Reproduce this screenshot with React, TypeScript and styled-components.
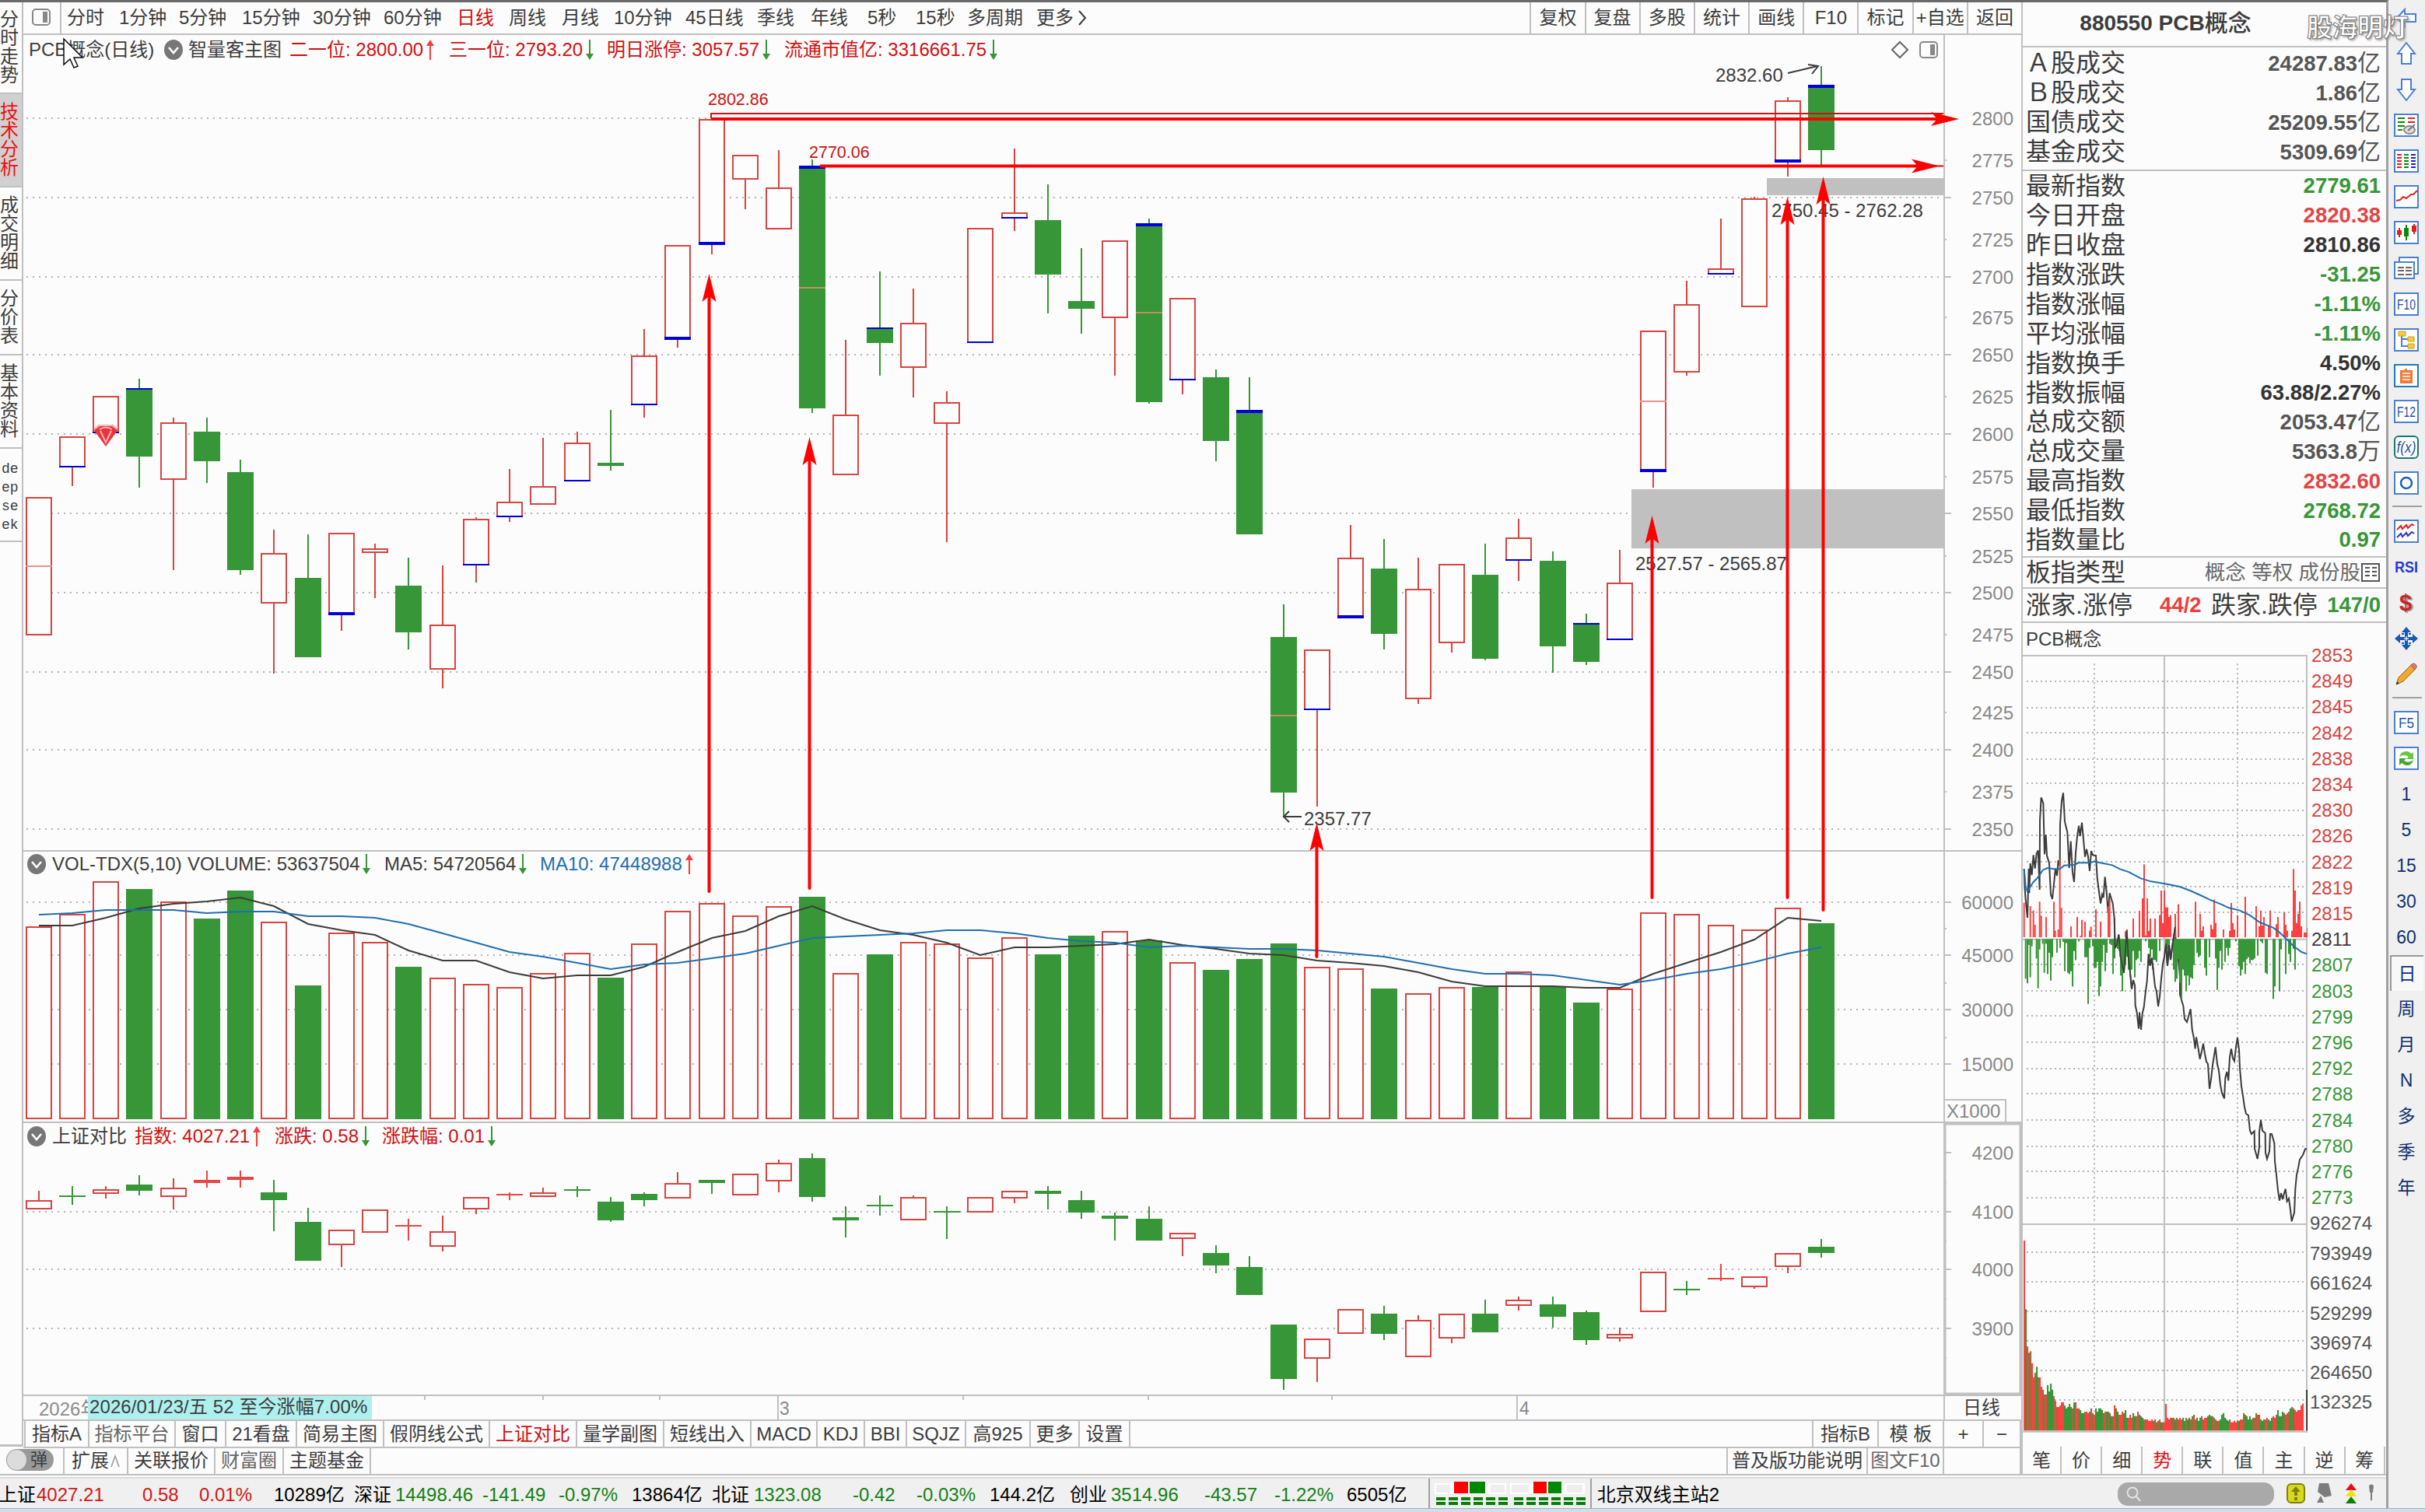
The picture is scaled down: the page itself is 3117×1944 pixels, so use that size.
import React from "react";
import styled, { createGlobalStyle, css } from "styled-components";

const RED = "#d64541";
const HOT = "#cf1010";
const GREEN = "#379637";
const LINE = "#c0c0c0";
const INK = "#3c3c3c";
const BG = "#fcfcfc";

const GlobalStyle = createGlobalStyle`
  * { box-sizing: border-box; }
  body {
    margin: 0;
    background: ${BG};
    color: ${INK};
    font: 24px/1 "Liberation Sans", "Noto Sans CJK SC", sans-serif;
  }
  svg { display: block; }
  svg text { font-family: "Liberation Sans", "Noto Sans CJK SC", sans-serif; }
`;

/* ---------- data ---------- */

// kind, high, top, bottom, low, opening mark thickness, middle line
type Candle = [string, number, number, number, number, number?, number?];

const PRICE: Candle[] = [
  ["r", 639, 639, 817, 817, 0, 728], ["r", 561, 561, 601, 625, 2], ["r", 509, 509, 557, 573, 2],
  ["g", 487, 499, 587, 627, 2], ["r", 537, 543, 617, 733], ["g", 537, 555, 593, 621],
  ["g", 591, 607, 733, 739], ["r", 681, 711, 776, 866], ["g", 687, 743, 845, 845],
  ["r", 685, 685, 791, 811, 4], ["r", 699, 705, 711, 769], ["g", 717, 753, 813, 835],
  ["r", 727, 803, 861, 885], ["r", 665, 667, 727, 749, 2], ["r", 603, 645, 665, 671, 2],
  ["r", 563, 625, 649, 649], ["r", 555, 569, 619, 619, 2], ["g", 527, 595, 599, 605],
  ["r", 423, 457, 521, 537, 2], ["r", 315, 315, 437, 447, 4], ["r", 153, 153, 315, 327, 4],
  ["r", 199, 199, 231, 269], ["r", 193, 241, 295, 295], ["g", 205, 213, 525, 531, 4, 370],
  ["r", 437, 533, 611, 611], ["g", 349, 421, 441, 483, 2], ["r", 371, 415, 473, 511],
  ["r", 503, 517, 545, 697], ["r", 293, 293, 441, 441, 2], ["r", 191, 273, 281, 297, 2],
  ["g", 237, 283, 353, 403], ["g", 319, 387, 397, 429], ["r", 309, 309, 409, 483],
  ["g", 281, 287, 517, 519, 4, 402], ["r", 383, 383, 489, 507, 2], ["g", 475, 485, 567, 593],
  ["g", 485, 527, 687, 687, 4], ["g", 777, 819, 1019, 1051, 0, 920], ["r", 835, 835, 913, 1037, 2],
  ["r", 675, 717, 795, 795, 4], ["g", 693, 731, 815, 835], ["r", 717, 757, 899, 905],
  ["r", 725, 725, 827, 839], ["g", 699, 739, 847, 849], ["r", 667, 691, 721, 747, 2],
  ["g", 709, 721, 831, 865], ["g", 789, 801, 851, 855, 2], ["r", 707, 749, 823, 823, 2],
  ["r", 425, 425, 607, 627, 4, 516], ["r", 361, 391, 479, 483], ["r", 281, 345, 353, 353, 2],
  ["r", 253, 255, 395, 395], ["r", 125, 129, 209, 227, 4], ["g", 85, 109, 193, 212, 4],
];

const VOLUME = [
  1191, 1175, 1133, 1143, 1159, 1181, 1145, 1185, 1267, 1199, 1211, 1243, 1257, 1265, 1269, 1251, 1225, 1257,
  1213, 1171, 1161, 1177, 1165, 1153, 1251, 1227, 1211, 1213, 1231, 1205, 1227, 1203, 1197, 1209, 1237, 1247,
  1233, 1213, 1243, 1245, 1271, 1277, 1269, 1269, 1249, 1269, 1289, 1271, 1173, 1175, 1189, 1195, 1167, 1187,
];
const MA5 = [
  1190, 1190, 1180, 1168, 1162, 1159, 1154, 1165, 1188, 1196, 1202, 1222, 1235, 1235, 1250, 1258, 1254, 1254,
  1243, 1224, 1206, 1197, 1178, 1165, 1182, 1196, 1202, 1212, 1228, 1218, 1218, 1216, 1214, 1208, 1215, 1220,
  1226, 1228, 1235, 1238, 1242, 1250, 1262, 1268, 1268, 1268, 1270, 1270, 1252, 1238, 1224, 1208, 1180, 1184,
];
const MA10 = [
  1176, 1174, 1170, 1170, 1170, 1174, 1172, 1172, 1178, 1178, 1180, 1188, 1200, 1212, 1224, 1230, 1238, 1246,
  1240, 1238, 1232, 1226, 1216, 1206, 1204, 1202, 1200, 1196, 1196, 1200, 1206, 1210, 1212, 1218, 1216, 1218,
  1220, 1220, 1222, 1226, 1230, 1238, 1246, 1252, 1252, 1254, 1260, 1266, 1260, 1252, 1246, 1237, 1226, 1218,
];

const INDEX: Candle[] = [
  ["r", 1531, 1543, 1555, 1555], ["g", 1525, 1537, 1539, 1549], ["r", 1525, 1529, 1535, 1541],
  ["g", 1511, 1523, 1531, 1537], ["r", 1515, 1527, 1539, 1555], ["s", 1505, 1517, 1521, 1527],
  ["s", 1505, 1513, 1517, 1527], ["g", 1517, 1533, 1543, 1583], ["g", 1553, 1571, 1621, 1621],
  ["r", 1581, 1581, 1601, 1629], ["r", 1555, 1555, 1585, 1585], ["s", 1567, 1575, 1577, 1595],
  ["r", 1563, 1583, 1603, 1609], ["r", 1539, 1539, 1555, 1561], ["s", 1533, 1535, 1537, 1543],
  ["r", 1527, 1533, 1539, 1539], ["g", 1525, 1529, 1531, 1539], ["g", 1539, 1545, 1569, 1571],
  ["g", 1533, 1535, 1543, 1551], ["r", 1507, 1521, 1541, 1541], ["g", 1517, 1517, 1521, 1535],
  ["r", 1509, 1509, 1537, 1537], ["r", 1491, 1495, 1519, 1533], ["g", 1483, 1489, 1539, 1545],
  ["g", 1551, 1565, 1569, 1591], ["g", 1537, 1549, 1551, 1563], ["r", 1537, 1539, 1569, 1569],
  ["g", 1551, 1557, 1559, 1593], ["r", 1539, 1539, 1559, 1559], ["r", 1531, 1531, 1541, 1547],
  ["g", 1525, 1531, 1535, 1555], ["g", 1531, 1543, 1559, 1567], ["g", 1559, 1563, 1567, 1595],
  ["g", 1551, 1567, 1595, 1595], ["r", 1585, 1585, 1593, 1615], ["g", 1601, 1611, 1627, 1637],
  ["g", 1615, 1629, 1665, 1665], ["g", 1703, 1703, 1773, 1787], ["r", 1721, 1721, 1747, 1777],
  ["r", 1683, 1683, 1715, 1715], ["g", 1679, 1689, 1715, 1723], ["r", 1691, 1697, 1745, 1745],
  ["r", 1689, 1689, 1721, 1727], ["g", 1671, 1689, 1713, 1713], ["r", 1667, 1671, 1679, 1685],
  ["g", 1667, 1677, 1693, 1707], ["g", 1685, 1687, 1723, 1729], ["r", 1707, 1715, 1721, 1725],
  ["r", 1635, 1635, 1687, 1687], ["g", 1647, 1657, 1659, 1665], ["s", 1625, 1643, 1645, 1647],
  ["r", 1641, 1641, 1655, 1657], ["r", 1611, 1611, 1629, 1637], ["g", 1593, 1603, 1611, 1617],
];

const candleX = (i: number) => Math.round(49.7 + i * 43.24);

const PERIODS: [string, number][] = [
  ["分时", 67], ["1分钟", 77], ["5分钟", 81], ["15分钟", 91], ["30分钟", 91], ["60分钟", 94], ["日线", 67],
  ["周线", 68], ["月线", 67], ["10分钟", 92], ["45日线", 92], ["季线", 69], ["年线", 73], ["5秒", 62],
  ["15秒", 66], ["多周期", 89],
];
const TOOLS = ["复权", "复盘", "多股", "统计", "画线", "F10", "标记", "+自选", "返回"];

const QUOTE_TOP = [
  ["Ａ股成交", "24287.83", "亿"], ["Ｂ股成交", "1.86", "亿"], ["国债成交", "25209.55", "亿"], ["基金成交", "5309.69", "亿"],
];
const QUOTES: [string, string, string, string?][] = [
  ["最新指数", "2779.61", GREEN], ["今日开盘", "2820.38", "#e04545"], ["昨日收盘", "2810.86", "#333"],
  ["指数涨跌", "-31.25", GREEN], ["指数涨幅", "-1.11%", GREEN], ["平均涨幅", "-1.11%", GREEN],
  ["指数换手", "4.50%", "#333"], ["指数振幅", "63.88/2.27%", "#333"], ["总成交额", "2053.47", "#555", "亿"],
  ["总成交量", "5363.8", "#555", "万"], ["最高指数", "2832.60", "#e04545"], ["最低指数", "2768.72", GREEN],
  ["指数量比", "0.97", GREEN],
];

const MINI_PRICE =
  "20,352 22,415 26,470 33,540 38,350 40,445 44,330 50,375 56,298 62,350 68,293 74,280 80,432 81,166 86,76 94,98 99,295 104,220 108,300 117,330 123,450 129,468 134,420 141,350 147,378 152,318 158,340 159,180 165,90 171,58 177,170 187,210 194,348 200,245 207,365 213,402 219,290 225,225 231,185 236,225 243,173 249,238 255,305 261,275 267,305 273,360 279,282 285,298 297,300 302,385 308,432 315,485 321,450 326,462 332,382 338,440 344,520 350,445 356,465 362,485 368,540 371,655 378,645 385,605 392,690 398,720 405,752 410,680 416,590 422,690 428,740 435,815 441,780 447,800 449,878 455,905 462,968 465,905 471,972 476,910 482,885 488,830 494,785 500,680 506,725 512,695 518,740 525,805 531,825 537,882 543,845 549,775 555,718 561,690 567,640 573,725 579,645 585,702 591,655 597,615 603,575 606,690 615,697 621,770 621,835 628,860 634,880 639,930 648,942 657,910 662,892 668,970 674,1000 680,1045 684,1000 692,1045 698,1085 705,1055 711,1025 717,1065 723,1095 729,1104 735,1200 741,1162 747,1109 753,1071 758,1039 765,1104 771,1130 777,1184 783,1216 792,1237 796,1157 802,1134 808,1168 813,1077 819,1045 825,1082 831,1093 837,1039 843,1002 849,1050 852,1120 858,1189 864,1227 870,1270 876,1296 885,1302 891,1361 897,1374 908,1363 909,1430 920,1470 927,1425 927,1366 933,1320 939,1361 950,1371 951,1446 957,1470 966,1441 969,1374 975,1374 985,1409 987,1479 993,1532 999,1591 1005,1631 1011,1602 1017,1626 1023,1602 1028,1586 1034,1634 1041,1623 1047,1666 1052,1711 1062,1677 1066,1586 1071,1532 1077,1505 1083,1473 1095,1455 1104,1432 1110,1432";
const MINI_AVG =
  "20,352 26,420 33,438 44,420 56,402 68,390 80,375 92,356 110,348 135,352 158,352 175,338 215,335 230,328 275,328 290,323 325,330 360,337 390,352 425,364 470,388 510,400 560,408 620,420 660,435 700,453 740,472 780,488 810,502 850,511 890,530 930,558 980,578 1000,592 1030,620 1060,650 1090,672 1110,679";
const MINI_UP =
  "20:482,44:495,56:512,62:567,80:478,86:532,105:537,135:478,140:590,152:585,158:315,164:502,201:573,225:537,237:610,243:548,255:555,273:590,278:574,297:507,315:555,345:495,350:470,411:592,417:585,441:543,465:513,477:465,483:334,489:608,495:465,501:590,507:543,525:543,543:530,549:435,555:560,561:435,567:500,573:500,579:537,585:530,603:525,615:488,681:478,699:525,705:590,711:573,741:567,747:584,753:470,759:560,789:585,813:590,819:483,825:560,831:585,843:530,873:459,915:495,927:573,933:512,939:570,945:537,963:573,969:512,993:565,999:537,1023:519,1029:567,1035:590,1053:590,1059:352,1065:435,1071:560,1077:525,1083:478,1089:573,1101:597,1107:597,1113:579";
const MINI_DOWN =
  "26:775,33:793,38:645,44:770,50:650,68:697,74:812,80:662,92:640,98:752,105:640,111:757,117:675,123:782,129:692,147:675,159:656,171:633,177:746,183:638,189:752,195:757,201:746,207:805,213:668,219:703,231:631,255:692,261:692,267:872,273:656,285:650,291:733,297:733,303:710,309:842,315:805,321:710,327:645,333:746,339:675,351:640,357:645,363:757,369:697,375:645,381:660,387:668,393:763,399:823,405:740,411:722,417:690,423:740,429:746,435:740,441:668,447:770,453:703,459:697,465:668,471:710,489:631,501:656,507:692,513:662,519:703,525:703,531:710,543:668,567:650,573:660,579:650,597:740,603:787,609:775,615:700,621:790,627:853,633:740,639:763,645:823,651:763,657:800,663:770,669:775,675:722,687:675,693:692,699:686,717:733,723:763,735:692,759:697,765:818,771:733,777:668,783:740,795:710,801:656,807:686,813:656,837:631,849:727,855:763,861:740,867:710,873:757,879:700,885:692,891:716,897:703,903:703,909:697,921:686,933:631,939:638,951:752,957:757,981:853,987:805,1005:823,1011:662,1029:757,1041:680,1047:710,1059:660,1065:740";
const MINI_VOL = [
  684, 437, 303, 280, 286, 242, 192, 208, 230, 192, 192, 158, 147, 130, 130, 164, 141, 169, 147, 124, 107, 85, 85,
  90, 102, 102, 90, 80, 85, 96, 85, 80, 102, 102, 80, 80, 74, 63, 63, 68, 68, 63, 68, 80, 63, 57, 80, 68, 80, 80,
  74, 63, 68, 68, 68, 63, 52, 52, 91, 80, 68, 57, 57, 68, 63, 74, 46, 46, 57, 46, 63, 52, 52, 68, 57, 52, 46, 40,
  40, 40, 35, 35, 40, 35, 40, 30, 35, 40, 30, 30, 30, 96, 46, 40, 46, 46, 46, 40, 46, 40, 46, 40, 46, 35, 46, 40,
  46, 40, 52, 57, 40, 46, 35, 46, 52, 40, 46, 46, 52, 57, 52, 52, 46, 40, 35, 35, 40, 57, 63, 46, 40, 35, 40, 30,
  30, 35, 30, 35, 35, 40, 40, 63, 57, 52, 40, 52, 40, 46, 46, 63, 57, 57, 40, 35, 40, 40, 46, 40, 35, 46, 52, 46,
  57, 74, 52, 52, 68, 63, 57, 63, 68, 80, 85, 80, 74, 68, 74, 74, 91, 97,
];
const MINI_VOL_TONE =
  "rgrbbrrbgbrrbbrggggbrbrrrrgggggbgrrbgggbrrbbbrgggggbrgbggbrggrrrgggrrrggbrgggbrrrrrbbbbbgbrrrrrbbgbbrrggbggbbbrgggbbrrgggbbbbbggggggrrrrrbgrrbgggggbbbrbgggrrgggrrbggggbbrbgbgrrrrrrr";
const TONES: Record<string, string> = { r: "#fb4141", g: GREEN, b: "#a2693c" };

/* ---------- layout ---------- */

const Screen = styled.div`
  position: relative;
  width: 3117px;
  height: 1944px;
  display: flex;
  flex-direction: column;
  overflow: hidden;
  background: ${BG};
`;
const Body = styled.div`
  height: 1939px;
  display: flex;
`;
const Main = styled.div`
  width: 3070px;
  display: flex;
  flex-direction: column;
  border-right: 3px solid #a0a0a0;
  border-top: 3px solid #6a6a6a;
`;
const BottomEdge = styled.div`
  height: 5px;
  background: #cfdfe9;
  border-top: 1px solid #9fb0ba;
`;
const Upper = styled.div`
  display: flex;
  height: 1894px;
`;
const Workspace = styled.div`
  width: 2600px;
  flex: none;
  border-right: 2px solid ${LINE};
`;
const Terminal = styled.div`
  display: flex;
  height: 1857px;
`;

const SideTabs = styled.div`
  width: 30px;
  flex: none;
  border-right: 2px solid ${LINE};
  border-bottom: 3px solid ${LINE};
`;
const SideTab = styled.div<{ h: number; active?: boolean; mono?: boolean }>`
  height: ${(p) => p.h}px;
  border-bottom: 2px solid ${LINE};
  display: flex;
  align-items: center;
  width: 28px;
  white-space: pre;
  font-size: 24px;
  line-height: 24px;
  word-break: break-all;
  ${(p) => p.active && css`background: #d0d0d0; color: #f01010;`}
  ${(p) => p.mono && css`font: 18px/24px "Liberation Mono", monospace; padding: 5px 0 0 2px;`}
  span { width: 25px; white-space: pre-line; }
`;
const Center = styled.div`
  width: 2568px;
`;
const PeriodBar = styled.div`
  height: 42px;
  display: flex;
  align-items: center;
  border-bottom: 2px solid ${LINE};
`;
const LayoutCell = styled.div`
  width: 49px;
  height: 40px;
  margin-right: 7px;
  padding: 8px 0 0 11px;
  border-right: 2px solid ${LINE};
`;
const Period = styled.div<{ w: number; active?: boolean }>`
  width: ${(p) => p.w}px;
  flex: none;
  white-space: nowrap;
  color: ${(p) => (p.active ? HOT : INK)};
`;
const Tools = styled.div`
  margin-left: auto;
  display: flex;
  height: 40px;
`;
const Tool = styled.div`
  width: 70.2px;
  display: flex;
  align-items: center;
  justify-content: center;
  white-space: nowrap;
  border-left: 2px solid ${LINE};
`;

const Panel = styled.div<{ h: number }>`
  position: relative;
  height: ${(p) => p.h}px;
`;
const Legend = styled.div<{ x: number; y: number }>`
  position: absolute;
  left: ${(p) => p.x}px;
  top: ${(p) => p.y}px;
  height: 34px;
  display: flex;
  align-items: center;
`;
const LegendText = styled.div<{ w?: number; tone?: string }>`
  display: flex;
  align-items: center;
  flex: none;
  width: ${(p) => (p.w ? p.w + "px" : "auto")};
  color: ${(p) => p.tone || INK};
  white-space: pre;
`;
const TrendIcon = styled.svg`
  margin-left: 4px;
`;
const DateRow = styled.div`
  height: 32px;
  display: flex;
  border-bottom: 2px solid ${LINE};
`;
const DateYear = styled.div`
  width: 83px;
  flex: none;
  padding: 5px 0 0 20px;
  overflow: hidden;
  white-space: nowrap;
  color: #8c8c8c;
`;
const DateHint = styled.div`
  width: 365px;
  flex: none;
  padding: 2px 0 0 2px;
  background: #aef0ee;
  white-space: nowrap;
  letter-spacing: 0.1px;
`;
const DateScale = styled.div`
  width: 2020px;
  flex: none;
`;
const PeriodName = styled.div`
  width: 100px;
  padding: 3px 4px 0 0;
  text-align: center;
  border-left: 2px solid ${LINE};
`;

const TabRow = styled.div<{ h: number; inset?: number }>`
  display: flex;
  height: ${(p) => p.h}px;
  padding-left: ${(p) => p.inset || 0}px;
  border-bottom: 2px solid ${LINE};
`;
const Tab = styled.div<{ w: number; tone?: string; first?: boolean }>`
  width: ${(p) => p.w}px;
  flex: none;
  display: flex;
  align-items: center;
  justify-content: center;
  white-space: pre;
  color: ${(p) => p.tone || INK};
  border-right: 2px solid ${LINE};
  ${(p) => p.first && css`border-left: 2px solid ${LINE};`}
`;
const Push = styled.div`
  margin-left: auto;
  display: flex;
`;
const Toggle = styled.div`
  width: 61px;
  height: 28px;
  margin: 3px 12px 0 8px;
  border-radius: 14px;
  background: #999;
  display: flex;
  align-items: center;
  gap: 5px;
  font-size: 22px;
  &::before {
    content: "";
    width: 25px;
    height: 26px;
    margin-left: 1px;
    border-radius: 50%;
    background: #dcdcdc;
  }
`;

const Quotes = styled.div`
  width: 467px;
  flex: none;
`;
const QuoteTitle = styled.div`
  height: 58px;
  border-bottom: 2px solid ${LINE};
  display: flex;
  align-items: center;
  justify-content: center;
  padding: 0 100px 3px 0;
  font-size: 28px;
  font-weight: 700;
  span { font-weight: 500; font-size: 30px; }
`;
const QuoteGroup = styled.div<{ h: number; pad?: number }>`
  height: ${(p) => p.h}px;
  border-bottom: 2px solid ${LINE};
  padding: ${(p) => p.pad || 0}px 7px 0 4px;
`;
const QuoteRow = styled.div<{ h?: number }>`
  height: ${(p) => p.h || 37.95}px;
  display: flex;
  align-items: center;
  justify-content: space-between;
  font-size: 32px;
  white-space: pre;
`;
const QuoteValue = styled.div<{ tone: string }>`
  color: ${(p) => p.tone};
  font-size: 27.5px;
  font-weight: 700;
  span { font-weight: 400; font-size: 30px; }
`;
const QuoteNote = styled.div`
  display: flex;
  align-items: center;
  font-size: 26.5px;
  color: #6a6a6a;
`;
const MiniTitle = styled.div`
  height: 41px;
  padding: 9px 0 0 4px;
`;
const MiniBody = styled.div`
  display: flex;
  height: 1018px;
`;
const Scale = styled.svg`
  overflow: visible;
`;

const Status = styled.div`
  height: 42px;
  margin-top: 2px;
  border-top: 2px solid #dcdcdc;
  background: #f0f0f0;
  display: flex;
  align-items: center;
  font-size: 24px;
  color: #000;
`;
const StatusText = styled.div<{ w: number; tone?: string }>`
  width: ${(p) => p.w}px;
  flex: none;
  padding-top: 2px;
  color: ${(p) => p.tone || "#000"};
  white-space: nowrap;
  &:first-child { margin-left: -2px; }
`;
const Lights = styled.div`
  width: 210px;
  height: 40px;
  flex: none;
  border-left: 2px solid #a0a0a0;
  border-right: 2px solid #a0a0a0;
`;
const SearchBox = styled.div`
  width: 201px;
  height: 30px;
  margin-left: auto;
  padding: 5px 0 0 11px;
  border-radius: 13px;
  background: #a9a9a9;
`;

const IconStrip = styled.div`
  width: 47px;
  padding-left: 2px;
  background: #f0f0f0;
`;
const IconCell = styled.div<{ active?: boolean }>`
  height: 46px;
  width: 43px;
  padding-right: 1px;
  display: flex;
  align-items: center;
  justify-content: center;
  font-size: 23px;
  color: #12306e;
  ${(p) => p.active && css`
    background: #f8f8f8;
    border-left: 2px solid #999;
    border-top: 2px solid #999;
  `}
`;
const StripRule = styled.div`
  height: 16px;
  padding: 6px 0 0 3px;
  &::after {
    content: "";
    display: block;
    width: 38px;
    height: 2px;
    background: #a0a0a0;
  }
`;

const Overlay = styled.svg`
  position: absolute;
  left: 0;
  top: 0;
  pointer-events: none;
`;
const Watermark = styled.div`
  position: absolute;
  left: 2965px;
  top: 19px;
  font-size: 33px;
  font-weight: 700;
  color: #fff;
  letter-spacing: -0.4px;
  white-space: nowrap;
  -webkit-text-stroke: 1px #777;
  text-shadow: 2px 2px 3px #999;
`;

/* ---------- small drawings ---------- */

const Chevron = () => (
  <svg width="24" height="26" viewBox="0 0 24 26">
    <ellipse cx="12" cy="13" rx="12" ry="13" fill="#777" />
    <path d="M6 10l6 7 6-7" fill="none" stroke="#fff" strokeWidth="2.5" />
  </svg>
);

const Trend = ({ up }: { up?: boolean }) => (
  <TrendIcon width="10" height="26" viewBox="0 0 10 26">
    {up ? (
      <path d="M5 0l5 8H6v18H4V8H0z" fill="#f04040" />
    ) : (
      <path d="M5 26l5-8H6V0H4v18H0z" fill={GREEN} />
    )}
  </TrendIcon>
);

const HalfBox = () => (
  <svg width="24" height="22" viewBox="0 0 24 22">
    <rect x="1" y="1" width="22" height="20" rx="4" fill="none" stroke="#888" strokeWidth="2" />
    <rect x="14" y="4" width="6" height="14" fill="#888" />
  </svg>
);

function Candles({ data, y0 }: { data: Candle[]; y0: number }) {
  return (
    <g>
      {data.map(([kind, high, top, bottom, low, mark = 0, mid], i) => {
        const x = candleX(i) - 30;
        const color = kind === "g" ? GREEN : kind === "s" ? "#e84545" : RED;
        const markY = (kind === "g" ? top : bottom - mark) - y0;
        return (
          <g key={i}>
            {high < top && <rect x={x - 1} y={high - y0} width={2} height={top - high} fill={color} />}
            {low > bottom && <rect x={x - 1} y={bottom - y0} width={2} height={low - bottom} fill={color} />}
            {kind === "r" ? (
              <rect x={x - 16} y={top + 1 - y0} width={32} height={bottom - top - 2} fill="#fdfdfd" stroke={color} strokeWidth={2} />
            ) : (
              <rect x={x - 17} y={top - y0} width={34} height={bottom - top} fill={color} />
            )}
            {mark > 0 && <rect x={x - 17} y={markY} width={34} height={mark} fill="#0000dc" />}
            {mid && <rect x={x - 17} y={mid - 1 - y0} width={34} height={2} fill={kind === "g" ? "#c09060" : "#ee9090"} />}
          </g>
        );
      })}
    </g>
  );
}

function Grid({ rows, y0 }: { rows: number[]; y0: number }) {
  return (
    <g>
      {rows.map((y) => (
        <line key={y} x1={4} x2={2468} y1={y - y0} y2={y - y0} stroke="#b4b4b4" strokeWidth={2} strokeDasharray="2 6" />
      ))}
    </g>
  );
}

function Axis({ marks, minor, y0, h }: { marks: [number, string][]; minor: number[]; y0: number; h: number }) {
  return (
    <g>
      <line x1={2469} x2={2469} y1={0} y2={h} stroke={LINE} strokeWidth={2} />
      {marks.map(([y, label]) => (
        <g key={label}>
          {!minor.includes(y) && <line x1={2468} x2={2478} y1={y - y0} y2={y - y0} stroke={LINE} strokeWidth={2} />}
          <text x={2558} y={y - y0 + 9} textAnchor="end" fontSize={24} fill="#888">{label}</text>
        </g>
      ))}
      {minor.map((y) => (
        <line key={y} x1={2468} x2={2472} y1={y - y0} y2={y - y0} stroke={LINE} strokeWidth={2} />
      ))}
    </g>
  );
}

const PRICE_MARKS: [number, string][] = [
  [152, "2800"], [206, "2775"], [254, "2750"], [308, "2725"], [356, "2700"], [408, "2675"], [456, "2650"],
  [510, "2625"], [558, "2600"], [613, "2575"], [660, "2550"], [715, "2525"], [762, "2500"], [816, "2475"],
  [864, "2450"], [916, "2425"], [964, "2400"], [1018, "2375"], [1066, "2350"],
];

function PricePanel() {
  return (
    <Panel h={1050}>
      <svg width={2568} height={1050}>
        <Grid y0={45} rows={PRICE_MARKS.filter((_, i) => i % 2 === 0).map((m) => m[0])} />
        <rect x={2241} y={184} width={227} height={22} fill={LINE} />
        <rect x={2067} y={584} width={401} height={76} fill={LINE} />
        <Candles data={PRICE} y0={45} />
        <g transform="translate(0 5)">
          <path d="M97 496h18l7 6-16 22-16-22z" fill="#e8343c" />
          <path d="M91 502l7-5h16l7 5M99 504l7 15 7-15M98 502q8-5 16 0" fill="none" stroke="#ffb4b4" strokeWidth={2} />
        </g>
        <Axis y0={45} h={1050} marks={PRICE_MARKS} minor={PRICE_MARKS.filter((_, i) => i % 2).map((m) => m[0])} />
        <g fontSize={24} fill={INK}>
          <text x={2175} y={60}>2832.60</text>
          <text x={2247} y={234}>2750.45 - 2762.28</text>
          <text x={2072} y={688}>2527.57 - 2565.87</text>
          <text x={1646} y={1016}>2357.77</text>
          <path d="M2268 49l38-9M2294 38l13 2-8 10M1643 1005h-23M1627 998l-7 7 7 7" fill="none" stroke={INK} strokeWidth={2} />
        </g>
        <g fontSize={21.5} fill={HOT}>
          <text x={880} y={90}>2802.86</text>
          <text x={1010} y={158}>2770.06</text>
        </g>
        <path d="M2412 9l10 10-10 10-10-10z" fill="none" stroke="#666" strokeWidth={2} />
        <g transform="translate(2437 8)">
          <rect x="1" y="1" width="22" height="20" rx="4" fill="none" stroke="#888" strokeWidth="2" />
          <rect x="14" y="4" width="6" height="14" fill="#888" />
        </g>
        <rect y={1048} width={2568} height={2} fill={LINE} />
      </svg>
      <Legend x={7} y={2}>
        <LegendText w={174}>PCB概念(日线)</LegendText>
        <LegendText w={31}><Chevron /></LegendText>
        <LegendText w={130}>智量客主图</LegendText>
        <LegendText w={205} tone={HOT}>二一位: 2800.00<Trend up /></LegendText>
        <LegendText w={203} tone={HOT}>三一位: 2793.20<Trend /></LegendText>
        <LegendText w={228} tone={HOT}>明日涨停: 3057.57<Trend /></LegendText>
        <LegendText tone={HOT}>流通市值亿: 3316661.75<Trend /></LegendText>
      </Legend>
    </Panel>
  );
}

function VolumePanel() {
  const points = (list: number[]) => list.map((v, i) => `${candleX(i) - 30},${v - 1095}`).join(" ");
  return (
    <Panel h={349}>
      <svg width={2568} height={349}>
        <Grid y0={1095} rows={[1160, 1228, 1298, 1368]} />
        {VOLUME.map((top, i) =>
          PRICE[i][0] === "g" ? (
            <rect key={i} x={candleX(i) - 47} y={top - 1095} width={34} height={1439 - top} fill={GREEN} />
          ) : (
            <rect key={i} x={candleX(i) - 46} y={top - 1094} width={32} height={1437 - top} fill="#fdfdfd" stroke={RED} strokeWidth={2} />
          )
        )}
        <polyline points={points(MA5)} fill="none" stroke={INK} strokeWidth={2} />
        <polyline points={points(MA10)} fill="none" stroke="#1f6fb0" strokeWidth={2} />
        <Axis
          y0={1095}
          h={349}
          marks={[[1160, "60000"], [1228, "45000"], [1298, "30000"], [1368, "15000"]]}
          minor={[1194, 1264, 1334]}
        />
        <rect x={2469} y={319} width={79} height={29} fill="none" stroke={LINE} strokeWidth={2} />
        <text x={2472} y={342} fontSize={24} fill="#888">X1000</text>
        <rect y={347} width={2568} height={2} fill={LINE} />
      </svg>
      <Legend x={5} y={-1}>
        <LegendText w={32}><Chevron /></LegendText>
        <LegendText w={174}>VOL-TDX(5,10)</LegendText>
        <LegendText w={253}>VOLUME: 53637504<Trend /></LegendText>
        <LegendText w={200}>MA5: 54720564<Trend /></LegendText>
        <LegendText tone="#1f6fb0">MA10: 47448988<Trend up /></LegendText>
      </Legend>
    </Panel>
  );
}

function IndexPanel() {
  return (
    <Panel h={351}>
      <svg width={2568} height={351}>
        <Grid y0={1444} rows={[1558, 1632, 1708]} />
        <Candles data={INDEX} y0={1444} />
        <Axis
          y0={1444}
          h={351}
          marks={[[1482, "4200"], [1558, "4100"], [1632, "4000"], [1708, "3900"]]}
          minor={[1520, 1596, 1670, 1746]}
        />
        <rect x={2470} y={1} width={97} height={347} fill="none" stroke={LINE} strokeWidth={3} />
        <rect y={349} width={2568} height={2} fill={LINE} />
      </svg>
      <Legend x={5} y={0}>
        <LegendText w={32}><Chevron /></LegendText>
        <LegendText w={106}>上证对比</LegendText>
        <LegendText w={180} tone={HOT}>指数: 4027.21<Trend up /></LegendText>
        <LegendText w={138} tone={HOT}>涨跌: 0.58<Trend /></LegendText>
        <LegendText tone={HOT}>涨跌幅: 0.01<Trend /></LegendText>
      </Legend>
    </Panel>
  );
}

const bars = (src: string) => src.split(",").map((s) => s.split(":").map(Number));

// drawn in thirds of a pixel so that the minute bars keep their odd widths
const MiniPlot = styled.svg`
  flex: none;
`;

function MiniChart() {
  const rows = [876, 910, 942, 976, 1007, 1042, 1074, 1108, 1140, 1173, 1240, 1274, 1306, 1340, 1374, 1406, 1440, 1474, 1506, 1540, 1610, 1648, 1686, 1724, 1762, 1800];
  return (
    <MiniPlot width={366} height={1000} viewBox="15 -474 1098 3000">
      {rows.map((y) => (
        <line key={y} x1={30} x2={1104} y1={(y - 1000) * 3} y2={(y - 1000) * 3} stroke="#b4b4b4" strokeWidth={6} strokeDasharray="6 12" />
      ))}
      {[291, 843].map((x) => (
        <line key={x} x1={x} x2={x} y1={-440} y2={2516} stroke="#b4b4b4" strokeWidth={6} strokeDasharray="6 12" />
      ))}
      <path d="M561-474V2520M15 623H1113M15 1722H1113M15-471H1110V2526M15 2522H1113" fill="none" stroke={LINE} strokeWidth={6} />
      <polyline points={MINI_PRICE} fill="none" stroke={INK} strokeWidth={6} />
      {bars(MINI_UP).map(([x, y]) => (
        <rect key={x} x={x - 3} y={y} width={6} height={615 - y} fill="#fb4141" />
      ))}
      {bars(MINI_DOWN).map(([x, y]) => (
        <rect key={x} x={x - 3} y={622} width={6} height={y - 622} fill={GREEN} />
      ))}
      <polyline points="368,540 371,655 378,645 385,605 392,690 398,720 405,752 410,680 416,590 422,690 428,740 435,815" fill="none" stroke={INK} strokeWidth={5} />
      <polyline points="500,680 506,725 512,695 518,740" fill="none" stroke={INK} strokeWidth={6} />
      <polyline points="567,640 573,725 579,645 585,702 591,655 597,615 603,575" fill="none" stroke={INK} strokeWidth={6} />
      <polyline points={MINI_AVG} fill="none" stroke="#1f6fb0" strokeWidth={6} />
      {MINI_VOL.slice(0, 181).map((v, i) => (
        <rect key={i} x={18 + i * 6} y={2518 - v * 1.0714} width={6.3} height={v * 1.0714} fill={TONES[MINI_VOL_TONE[i]] || TONES.r} />
      ))}
      <rect x={1108} y={2361} width={5} height={157} fill="#222" />
    </MiniPlot>
  );
}

function MiniScale() {
  const prices = [2853, 2849, 2845, 2842, 2838, 2834, 2830, 2826, 2822, 2819, 2815, 2811, 2807, 2803, 2799, 2796, 2792, 2788, 2784, 2780, 2776, 2773];
  const volumes = [926274, 793949, 661624, 529299, 396974, 264650, 132325];
  return (
    <Scale width={100} height={1018}>
      {prices.map((p, i) => (
        <text key={p} x={5} y={9 + i * 33.2} fontSize={24} fill={i < 11 ? RED : i === 11 ? INK : GREEN}>{p}</text>
      ))}
      {volumes.map((v, i) => (
        <text key={v} x={3} y={i ? 740 + i * 38.2 : 739} fontSize={24} fill="#555">{v}</text>
      ))}
    </Scale>
  );
}

/* ---------- icon strip ---------- */

const Frame = ({ children, color = "#4a7fd4" }: { children?: React.ReactNode; color?: string }) => (
  <svg width="32" height="30" viewBox="0 0 32 30">
    <rect x="1" y="1" width="30" height="28" fill="#fff" stroke={color} strokeWidth="2" />
    {children}
  </svg>
);

const FrameText = ({ label, width = 24 }: { label: string; width?: number }) => (
  <text x="16" y="22" textAnchor="middle" fontSize={19} fill="#2150a8" textLength={width} lengthAdjust="spacingAndGlyphs">
    {label}
  </text>
);

const STRIP_ICONS = [
  <svg width="28" height="26" viewBox="0 0 28 26"><path d="M2 13l10-11v6h14v10H12v6z" fill="#fff" stroke="#4a7fd4" strokeWidth="2" /></svg>,
  <svg width="26" height="32" viewBox="0 0 26 32"><path d="M13 2l11 14h-5v13H7V16H2z" fill="#fff" stroke="#4a7fd4" strokeWidth="2" /></svg>,
  <svg width="26" height="32" viewBox="0 0 26 32"><path d="M13 30l11-14h-5V3H7v13H2z" fill="#fff" stroke="#4a7fd4" strokeWidth="2" /></svg>,
  <Frame>
    <path d="M5 6h9M5 11h9M5 16h9M5 21h6" stroke="#0a8a0a" strokeWidth="2" />
    <path d="M18 6h9M18 11h9" stroke="#e02020" strokeWidth="2" />
    <ellipse cx="20" cy="21" rx="7" ry="5" fill="#ddd" stroke="#888" strokeWidth="2" />
    <path d="M18 22l9-8" stroke="#777" strokeWidth="2" />
  </Frame>,
  <Frame>
    <path d="M4 7h6M4 11h6M4 15h6M4 19h6M4 23h6" stroke="#e02020" strokeWidth="2" />
    <path d="M13 7h6M13 11h6M13 15h6M13 19h6M13 23h6" stroke="#0a8a0a" strokeWidth="2" />
    <path d="M22 7h6M22 11h6M22 15h6M22 19h6M22 23h6" stroke="#2020d0" strokeWidth="2" />
  </Frame>,
  <Frame><path d="M3 20l5-1 4-4 4 2 6-5h3l5-5" fill="none" stroke="#e02020" strokeWidth="2" /></Frame>,
  <Frame>
    <path d="M7 9v12M26 4v13" stroke="#e02020" strokeWidth="2" />
    <path d="M4 12h6v6H4zM23 6h6v8h-6z" fill="#e02020" />
    <path d="M16 5v20" stroke="#0a8a0a" strokeWidth="2" />
    <path d="M13 9h6v11h-6z" fill="#0a8a0a" />
  </Frame>,
  <svg width="32" height="30" viewBox="0 0 32 30">
    <path d="M7 1h24v21H7z" fill="#fff" stroke="#4a7fd4" strokeWidth="2" />
    <path d="M1 7h25v21H1z" fill="#fff" stroke="#4a7fd4" strokeWidth="2" />
    <path d="M5 14h8M15 14h8M5 18h8M15 18h8M5 23h8M15 23h8" stroke="#666" strokeWidth="2" />
  </svg>,
  <Frame><FrameText label="F10" /></Frame>,
  <Frame>
    <path d="M10 8v15h9M10 14h9" fill="none" stroke="#4a7fd4" strokeWidth="2" />
    <path d="M6 4h9v6H6zM18 11h8v6h-8zM18 20h8v6h-8z" fill="#f4cc40" stroke="#d0a010" />
  </Frame>,
  <Frame color="#1c7cc4">
    <path d="M8 8h5l3-3 1 3h7v17H8z" fill="#f07a3c" />
    <path d="M11 12h10M11 16h10M11 20h10" stroke="#fff" strokeWidth="1.5" />
  </Frame>,
  <Frame><FrameText label="F12" /></Frame>,
  <svg width="32" height="30" viewBox="0 0 32 30">
    <rect x="1" y="1" width="30" height="28" rx="5" fill="#fff" stroke="#187878" strokeWidth="2" />
    <text x="16" y="22" textAnchor="middle" fontSize="20" fontStyle="italic" fill="#2150a8" textLength={25} lengthAdjust="spacingAndGlyphs">f(x)</text>
  </svg>,
  <Frame><ellipse cx="16" cy="15" rx="7" ry="7" fill="none" stroke="#1c60c0" strokeWidth="2.5" /></Frame>,
];

const STRIP_TOOLS = [
  <Frame>
    <path d="M4 13l5-5 2 4 5-5 2 4 5-5 3 2" fill="none" stroke="#e02020" strokeWidth="2" />
    <path d="M4 23l5-5 2 4 5-5 2 4 5-5 3 2" fill="none" stroke="#3030d0" strokeWidth="2" />
  </Frame>,
  <svg width="32" height="24"><text x="16" y="19" textAnchor="middle" fontSize="20" fontWeight="700" fill="#2838d0" textLength="30" lengthAdjust="spacingAndGlyphs">RSI</text></svg>,
  <svg width="28" height="36">
    <text x="15" y="29" textAnchor="middle" fontSize="29" fontWeight="700" fill="#999">$</text>
    <text x="13" y="28" textAnchor="middle" fontSize="29" fontWeight="700" fill="#c82828">$</text>
  </svg>,
  <svg width="30" height="30" viewBox="0 0 30 30">
    <path d="M15 0l6 7h-4v6h6V9l7 6-7 6v-4h-6v6h4l-6 7-6-7h4v-6H7v4l-7-6 7-6v4h6V7H9z" fill="#1858b0" />
    <path d="M9 9h3M18 9h3M9 21h3M18 21h3" stroke="#1858b0" strokeWidth="2" />
    <path d="M12 15h6M15 12v6" stroke="#d8e8ff" strokeWidth="1.5" />
  </svg>,
  <svg width="30" height="30" viewBox="0 0 30 30">
    <path d="M2 28l3-9L21 3l6 5L11 24z" fill="#f0a830" stroke="#9a6414" />
    <path d="M21 3l3-2q5 1 4 5l-2 3z" fill="#e87878" stroke="#a05050" />
    <path d="M2 28l1-4 3 3z" fill="#333" />
  </svg>,
];

const Refresh = () => (
  <Frame>
    <path d="M7 13q2-8 11-7l5 3 2-2v9h-9l3-3q-6-4-12 0z" fill="#66c840" />
    <path d="M25 17q-2 8-10 7l-5-3-3 3v-9h9l-3 3q6 4 12-1z" fill="#40a830" />
  </Frame>
);

const IND_TABS: [string, number][] = [
  ["指标A", 84], ["指标平台", 111], ["窗口", 65], ["21看盘", 91], ["简易主图", 112], ["假阴线公式", 136],
  ["上证对比", 112], ["量学副图", 112], ["短线出入", 112], ["MACD", 85], ["KDJ", 61], ["BBI", 54], ["SQJZ", 76],
  ["高925", 83], ["更多", 63], ["设置", 65],
];
const S_RED = "#d01818";
const S_GREEN = "#148014";
const STATUS: [string, number, string?][] = [
  ["上证", 49, "#000"], ["4027.21", 136, S_RED], ["0.58", 73, S_RED], ["0.01%", 96, S_RED], ["10289亿", 103],
  ["深证", 53], ["14498.46", 112, S_GREEN], ["-141.49", 98, S_GREEN], ["-0.97%", 94, S_GREEN], ["13864亿", 103],
  ["北证", 54], ["1323.08", 127, S_GREEN], ["-0.42", 82, S_GREEN], ["-0.03%", 94, S_GREEN], ["144.2亿", 103],
  ["创业", 53], ["3514.96", 120, S_GREEN], ["-43.57", 90, S_GREEN], ["-1.22%", 93, S_GREEN], ["6505亿", 105],
];

const UpArrow = ({ x, tip, end }: { x: number; tip: number; end: number }) => (
  <g>
    <line x1={x} x2={x} y1={tip + 20} y2={end} stroke="#f00" strokeWidth={4} strokeLinecap="round" />
    <path d={`M${x} ${tip}l9 36-9-7-9 7z`} fill="#f00" />
  </g>
);

const RightArrow = ({ x1, x2, y }: { x1: number; x2: number; y: number }) => (
  <g>
    <line x1={x1} x2={x2 - 20} y1={y} y2={y} stroke="#f00" strokeWidth={4} />
    <path d={`M${x2} ${y}l-36-9 8 9-8 9z`} fill="#f00" />
  </g>
);

function StatusLights() {
  return (
    <svg width="206" height="40">
      <path d="M6 6h92v14H6zM103 6h96v14h-96z" fill="#fff" />
      <path d="M8 8h18v10H8zM78 8h18v10H78zM105 8h22v10h-22zM176 8h20v10h-20z" fill="#eee" />
      <path d="M31 4h18v15H31zM133 4h17v15h-17z" fill="#f00" />
      <path d="M51 4h20v15H51zM152 4h17v15h-17z" fill="#080" />
      {[0, 1, 2, 3, 4, 5, 6.25, 7.25, 8.25, 9.25, 10.25, 11.25].map((i) => (
        <path key={i} d={`M${8 + i * 16} 24h12v4h-12zM${8 + i * 16} 30h12v4h-12z`} fill="#0a7d0a" />
      ))}
    </svg>
  );
}

export default function App() {
  return (
    <Screen>
      <GlobalStyle />
      <Body>
        <Main>
          <Upper>
            <Workspace>
              <Terminal>
                <SideTabs>
                  <SideTab h={118}><span>分时走势</span></SideTab>
                  <SideTab h={120} active><span>技术分析</span></SideTab>
                  <SideTab h={120}><span>成交明细</span></SideTab>
                  <SideTab h={96}><span>分价表</span></SideTab>
                  <SideTab h={120}><span>基本资料</span></SideTab>
                  <SideTab h={120} mono><span>deepseek</span></SideTab>
                </SideTabs>
                <Center>
                  <PeriodBar>
                    <LayoutCell><HalfBox /></LayoutCell>
                    {PERIODS.map(([name, w]) => (
                      <Period key={name} w={w} active={name === "日线"}>{name}</Period>
                    ))}
                    <Period w={52}>更多</Period>
                    <svg width="14" height="26"><path d="M3 4l8 9-8 9" fill="none" stroke={INK} strokeWidth="2" /></svg>
                    <Tools>
                      {TOOLS.map((name) => (
                        <Tool key={name}>{name}</Tool>
                      ))}
                    </Tools>
                  </PeriodBar>
                  <PricePanel />
                  <VolumePanel />
                  <IndexPanel />
                  <DateRow>
                    <DateYear>2026年</DateYear>
                    <DateHint>2026/01/23/五 52 至今涨幅7.00%</DateHint>
                    <DateScale>
                      <svg width="2020" height="30">
                        <path d="M68 0v5M220 0v5M370 0v5M760 0v5M998 0v5M1234 0v5M522 0v30M1472 0v30" stroke={LINE} strokeWidth="2" />
                        <text x="524" y="24" fontSize="23" fill="#888">3</text>
                        <text x="1475" y="24" fontSize="23" fill="#888">4</text>
                      </svg>
                    </DateScale>
                    <PeriodName>日线</PeriodName>
                  </DateRow>
                  <TabRow h={35} inset={1}>
                    {IND_TABS.map(([name, w], i) => (
                      <Tab key={name} w={w} first={!i} tone={name === "上证对比" ? HOT : i === 1 ? "#666" : undefined}>{name}</Tab>
                    ))}
                    <Push>
                      <Tab w={86} first>指标B</Tab>
                      <Tab w={84}>模 板</Tab>
                      <Tab w={51}>+</Tab>
                      <Tab w={48}>−</Tab>
                    </Push>
                  </TabRow>
                </Center>
              </Terminal>
              <TabRow h={37}>
                <Toggle>弹</Toggle>
                <Tab w={84} first>扩展<svg width="14" height="20"><path d="M3 18L8 4l5 14" fill="none" stroke="#999" strokeWidth="1.5" /></svg></Tab>
                <Tab w={112}>关联报价</Tab>
                <Tab w={88} tone="#666">财富圈</Tab>
                <Tab w={112}>主题基金</Tab>
                <Push>
                  <Tab w={182} first>普及版功能说明</Tab>
                  <Tab w={98} tone="#666">图文F10</Tab>
                  <Tab w={99}> </Tab>
                </Push>
              </TabRow>
            </Workspace>
            <Quotes>
              <QuoteTitle>880550 PCB<span>概念</span></QuoteTitle>
              <QuoteGroup h={159} pad={1}>
                {QUOTE_TOP.map(([name, value, unit]) => (
                  <QuoteRow key={name} h={38}>{name}<QuoteValue tone="#555">{value}<span>{unit}</span></QuoteValue></QuoteRow>
                ))}
              </QuoteGroup>
              <QuoteGroup h={497}>
                {QUOTES.map(([name, value, tone, unit]) => (
                  <QuoteRow key={name}>{name}<QuoteValue tone={tone}>{value}{unit && <span>{unit}</span>}</QuoteValue></QuoteRow>
                ))}
              </QuoteGroup>
              <QuoteGroup h={40}>
                <QuoteRow h={38}>
                  板指类型
                  <QuoteNote>
                    概念 等权 成份股
                    <svg width="26" height="26">
                      <path d="M2 2h22v22H2zM6 7h6M6 12h6M6 17h6M15 7h6M15 12h6M15 17h6" fill="none" stroke="#555" strokeWidth="2" />
                    </svg>
                  </QuoteNote>
                </QuoteRow>
              </QuoteGroup>
              <QuoteGroup h={44}>
                <QuoteRow h={42}>
                  涨家.涨停
                  <QuoteValue tone="#e84040">   44/2</QuoteValue>
                  <span>跌家.跌停</span>
                  <QuoteValue tone={GREEN}>147/0</QuoteValue>
                </QuoteRow>
              </QuoteGroup>
              <MiniTitle>PCB概念</MiniTitle>
              <MiniBody><MiniChart /><MiniScale /></MiniBody>
              <TabRow h={37}>
                {"笔价细势联值主逆筹".split("").map((c, i) => (
                  <Tab key={c} w={i === 8 ? 51 : i ? 52.1 : 50} tone={c === "势" ? "#e01010" : undefined}>{c}</Tab>
                ))}
              </TabRow>
            </Quotes>
          </Upper>
          <Status>
            {STATUS.map(([text, w, tone], i) => (
              <StatusText key={i} w={w} tone={tone}>{text}</StatusText>
            ))}
            <Lights><StatusLights /></Lights>
            <StatusText w={240}>&nbsp;北京双线主站2</StatusText>
            <SearchBox>
              <svg width="20" height="20"><circle cx="8" cy="8" r="6.5" fill="none" stroke="#e4e4e4" strokeWidth="2" /><path d="M13 13l5 6" stroke="#e4e4e4" strokeWidth="2" /></svg>
            </SearchBox>
            <svg width="144" height="36">
              <rect x="17" y="5" width="22" height="24" rx="5" fill="#d8d820" stroke="#80800c" strokeWidth="2" />
              <path d="M28 8l6 7h-4v5h-4v-5h-4zM26 22h4v4h-4z" fill="#80800c" />
              <path d="M58 4h12l4 16-9 2-9-7zM60 20l-5 9h9z" fill="#7c7c7c" />
              <path d="M99 4l7 9H92z" fill="#e01010" />
              <path d="M99 12l7 9H92z" fill="#f0e010" />
              <path d="M99 21l7 9H92z" fill="#0a800a" />
              <path d="M122 7q3-3 6 0l-1 9h-4zM124 16h2v10h-2z" fill="#7c7c7c" />
            </svg>
          </Status>
        </Main>
        <IconStrip>
          {STRIP_ICONS.map((icon, i) => <IconCell key={i}>{icon}</IconCell>)}
          <StripRule />
          {STRIP_TOOLS.map((icon, i) => <IconCell key={i}>{icon}</IconCell>)}
          <StripRule />
          <IconCell><Frame><FrameText label="F5" width={20} /></Frame></IconCell>
          <IconCell><Refresh /></IconCell>
          {["1", "5", "15", "30", "60", "日", "周", "月", "N", "多", "季", "年"].map((c) => (
            <IconCell key={c} active={c === "日"}>{c}</IconCell>
          ))}
        </IconStrip>
      </Body>
      <BottomEdge />
      <Overlay width={3117} height={1944}>
        <path d="M914 152v-6H2498" fill="none" stroke={HOT} strokeWidth={2} />
        <line x1={2480} x2={2498} y1={213.5} y2={213.5} stroke={HOT} strokeWidth={2} />
        <RightArrow x1={914} x2={2518} y={153} />
        <RightArrow x1={1054} x2={2493} y={213.5} />
        <UpArrow x={911.5} tip={352} end={1146} />
        <UpArrow x={1040.5} tip={562} end={1142} />
        <UpArrow x={1692.5} tip={1058} end={1230} />
        <UpArrow x={2123.5} tip={663} end={1154} />
        <UpArrow x={2297.5} tip={253} end={1154} />
        <UpArrow x={2343.5} tip={227} end={1170} />
        <path d="M82 50v33l8-7 5 11 5-2-5-11h11z" fill="#fff" stroke="#111" strokeWidth={1.5} />
      </Overlay>
      <Watermark>股海明灯</Watermark>
    </Screen>
  );
}
